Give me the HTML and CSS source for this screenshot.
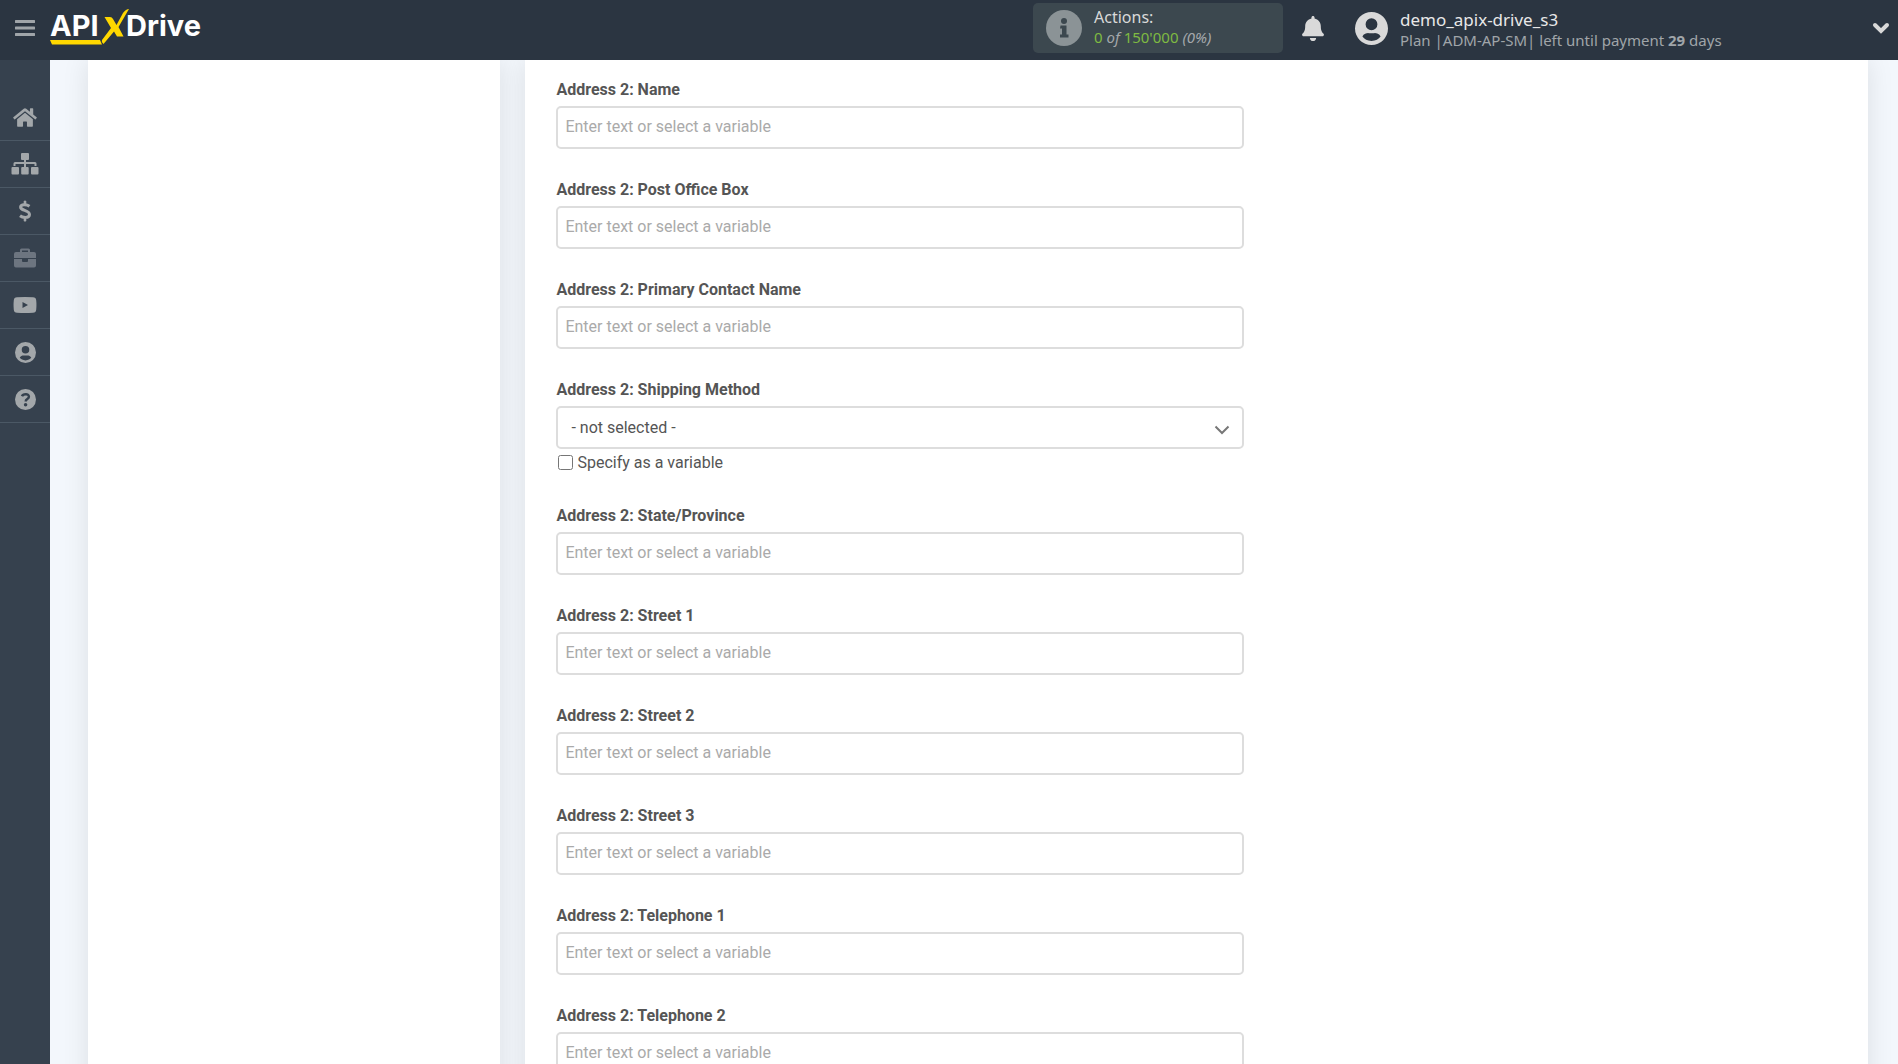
FILE: index.html
```
<!DOCTYPE html>
<html lang="en">
<head>
    <meta charset="UTF-8">
    <meta name="viewport" content="width=device-width, initial-scale=1.0">
    <title>ApiX-Drive</title>
    <link rel="stylesheet" href="styles.css">
</head>
<body>

    <!-- Top bar -->
    <header class="header">
        <button class="icon-btn menu-btn" aria-label="Menu">
            <svg width="20" height="18" viewBox="0 0 20 18"><path d="M1 2.500h18M1 9h18M1 15.500h18" stroke="currentColor" stroke-width="3" stroke-linecap="round"/></svg>
        </button>
        <a class="logo" href="#" aria-label="APIXDrive">
            <svg width="156" height="40" viewBox="0 0 156 40">
                <text class="logo-text" x="0" y="28">API</text>
                <text class="logo-text" x="76" y="28">Drive</text>
                <path fill="#ffd800" d="M54.500 9H60q2 0 3 2l3.500 6L73 5q3-4 6-4L68.500 19l5 9.500H67L64 23.500 53.500 36Q51 34 52 32L61 20zM0 32h50l2 4.500H2z"/>
            </svg>
        </a>

        <div class="actions">
            <svg width="36" height="36" viewBox="0 0 36 36">
                <circle cx="18" cy="18" r="18" fill="#8b9396"/>
                <g fill="#3c484f"><circle cx="18" cy="11" r="3"/><path d="M14.500 15.500h6v9h2v3h-8.500v-3h2v-6h-2z"/></g>
            </svg>
            <div>
                <div class="actions-title">Actions:</div>
                <div class="actions-count"><b>0</b> <i>of</i> <b>150'000</b> <i>(0%)</i></div>
            </div>
        </div>

        <button class="icon-btn bell-btn" aria-label="Notifications">
            <svg width="22" height="25" viewBox="0 0 448 512"><path fill="currentColor" d="M224 512c35.320 0 63.970-28.650 63.970-64H160.030c0 35.350 28.650 64 63.970 64zm215.390-149.710c-19.320-20.760-55.470-51.990-55.470-154.290 0-77.700-54.480-139.900-127.940-155.160V32c0-17.670-14.320-32-31.980-32s-31.980 14.330-31.980 32v20.840C118.560 68.100 64.080 130.300 64.080 208c0 102.300-36.150 133.530-55.470 154.290-6 6.450-8.660 14.160-8.610 21.710.11 16.400 12.980 32 32.100 32h383.800c19.120 0 32-15.600 32.100-32 .05-7.550-2.610-15.270-8.610-21.710z"/></svg>
        </button>

        <div class="user">
            <svg width="33" height="33" viewBox="0 0 24 24"><path fill="currentColor" fill-rule="evenodd" d="M12 0a12 12 0 1 0 0 24a12 12 0 0 0 0-24zM12 4.600a4.300 4.300 0 1 1 0 8.600a4.300 4.300 0 0 1 0-8.600zM12 21c-3 0-5.200-1.300-6.600-3.200c.8-1.900 3-2.500 4.200-2.500c1 .3 3.800.3 4.800 0c1.200 0 3.400.6 4.200 2.500C17.200 19.700 15 21 12 21z"/></svg>
            <div class="user-info">
                <div class="user-name">demo_apix-drive_s3</div>
                <div class="user-plan">Plan |ADM-AP-SM| left until payment <b>29</b> days</div>
            </div>
        </div>

        <button class="icon-btn toggle-btn" aria-label="Account menu">
            <svg width="18" height="12" viewBox="0 0 18 12"><path d="M3 3l6 6l6-6" fill="none" stroke="currentColor" stroke-width="4" stroke-linecap="round"/></svg>
        </button>
    </header>

    <div class="page">
        <!-- Side menu -->
        <nav class="sidebar">
            <a href="#" aria-label="Home">
                <svg width="24" height="21" viewBox="0 0 576 512"><path d="M280.370 148.260L96 300.110V464a16 16 0 0 0 16 16l112.060-.29a16 16 0 0 0 15.920-16V368a16 16 0 0 1 16-16h64a16 16 0 0 1 16 16v95.640a16 16 0 0 0 16 16.050L464 480a16 16 0 0 0 16-16V300L295.670 148.260a12.190 12.190 0 0 0-15.300 0zM571.600 251.470L488 182.560V44.050a12 12 0 0 0-12-12h-56a12 12 0 0 0-12 12v72.610L318.470 43a48 48 0 0 0-61 0L4.340 251.470a12 12 0 0 0-1.600 16.900l25.500 31A12 12 0 0 0 45.150 301l235.220-193.740a12.190 12.190 0 0 1 15.300 0L530.900 301a12 12 0 0 0 16.900-1.600l25.500-31a12 12 0 0 0-1.700-16.930z"/></svg>
            </a>
            <a href="#" aria-label="Connections">
                <svg width="28" height="22" viewBox="0 0 28 22"><rect x="10" y="0" width="8" height="7" rx="1"/><rect x="0.500" y="14" width="7.500" height="7.500" rx="1"/><rect x="10.200" y="14" width="7.500" height="7.500" rx="1"/><rect x="20" y="14" width="7.500" height="7.500" rx="1"/><path d="M13 6h2v3h9q1.500 0 1.500 1.500V13h-2v-2H15v3h-2v-3H4.500v2h-2v-2.500Q2.500 9 4 9h9z"/></svg>
            </a>
            <a href="#" aria-label="Payments">
                <svg width="14" height="22" viewBox="0 0 14 22"><path fill="none" stroke="currentColor" stroke-width="3" d="M11.500 6.200C9.500 4.800 3 3.300 2.600 7C2.300 11 11.700 9.800 11.500 14.600C11.300 18.500 4.500 17.700 2 15.800"/><path d="M5.700 1q1.300-1 2.600 0v4H5.700zM5.700 17h2.600v4q-1.300 1-2.600 0z"/></svg>
            </a>
            <a class="disabled" href="#" aria-label="Business">
                <svg width="22" height="20" viewBox="0 0 22 20"><path fill-rule="evenodd" d="M6 4V2q0-1.500 1.500-1.500h7Q16 .5 16 2v2h4q2 0 2 2v4H0V6q0-2 2-2zM8 4h6V2.500H8zM0 11h8v2q0 1 1 1h4q1 0 1-1v-2h8v6.500q0 2-2 2H2q-2 0-2-2z"/></svg>
            </a>
            <a href="#" aria-label="Video">
                <svg width="24" height="16" viewBox="0 0 24 16"><path fill-rule="evenodd" d="M4 .3q8-.6 16 0q3 .2 3.200 3q.5 4.700 0 9.400q-.2 2.800-3.200 3q-8 .6-16 0q-3-.2-3.200-3q-.5-4.700 0-9.400Q1 .5 4 .3zM9.500 5v6l5.500-3z"/></svg>
            </a>
            <a href="#" aria-label="Profile">
                <svg width="21" height="21" viewBox="0 0 24 24"><path fill-rule="evenodd" d="M12 0a12 12 0 1 0 0 24a12 12 0 0 0 0-24zM12 4.600a4.300 4.300 0 1 1 0 8.600a4.300 4.300 0 0 1 0-8.600zM12 21c-3 0-5.200-1.300-6.600-3.200c.8-1.900 3-2.500 4.200-2.500c1 .3 3.800.3 4.800 0c1.200 0 3.400.6 4.200 2.500C17.200 19.700 15 21 12 21z"/></svg>
            </a>
            <a href="#" aria-label="Help">
                <svg width="21" height="21" viewBox="0 0 24 24"><circle cx="12" cy="12" r="12"/><path d="M8 8.300C9 5.800 15.800 4.600 15.900 8.800c0 2.800-3.700 2.500-3.700 5.400" fill="none" stroke="#36414e" stroke-width="2.800"/><circle cx="12.100" cy="17.900" r="2" fill="#36414e"/></svg>
            </a>
        </nav>

        <main class="content">
            <section class="panel"></section>

            <section class="panel">
                <form class="form">
                    <div class="field">
                        <label for="name">Address 2: Name</label>
                        <input class="control" type="text" id="name" placeholder="Enter text or select a variable">
                    </div>
                    <div class="field">
                        <label for="pobox">Address 2: Post Office Box</label>
                        <input class="control" type="text" id="pobox" placeholder="Enter text or select a variable">
                    </div>
                    <div class="field">
                        <label for="contact">Address 2: Primary Contact Name</label>
                        <input class="control" type="text" id="contact" placeholder="Enter text or select a variable">
                    </div>
                    <div class="field">
                        <label for="shipping">Address 2: Shipping Method</label>
                        <div class="select-wrap">
                            <select class="control" id="shipping">
                                <option>- not selected -</option>
                            </select>
                            <svg class="select-arrow" width="16" height="10" viewBox="0 0 16 10"><path d="M1.500 1.500L8 8l6.500-6.500" fill="none" stroke="#777" stroke-width="2"/></svg>
                        </div>
                        <div class="check">
                            <input type="checkbox" id="variable">
                            <label for="variable">Specify as a variable</label>
                        </div>
                    </div>
                    <div class="field">
                        <label for="state">Address 2: State/Province</label>
                        <input class="control" type="text" id="state" placeholder="Enter text or select a variable">
                    </div>
                    <div class="field">
                        <label for="street1">Address 2: Street 1</label>
                        <input class="control" type="text" id="street1" placeholder="Enter text or select a variable">
                    </div>
                    <div class="field">
                        <label for="street2">Address 2: Street 2</label>
                        <input class="control" type="text" id="street2" placeholder="Enter text or select a variable">
                    </div>
                    <div class="field">
                        <label for="street3">Address 2: Street 3</label>
                        <input class="control" type="text" id="street3" placeholder="Enter text or select a variable">
                    </div>
                    <div class="field">
                        <label for="phone1">Address 2: Telephone 1</label>
                        <input class="control" type="text" id="phone1" placeholder="Enter text or select a variable">
                    </div>
                    <div class="field">
                        <label for="phone2">Address 2: Telephone 2</label>
                        <input class="control" type="text" id="phone2" placeholder="Enter text or select a variable">
                    </div>
                </form>
            </section>
        </main>
    </div>

</body>
</html>
```

FILE: styles.css
```
* {
    margin: 0;
    padding: 0;
    box-sizing: border-box;
}

body {
    display: flex;
    flex-direction: column;
    height: 100vh;
    overflow: hidden;
    background-color: #f3f7fc;
    color: #555;
    font-family: Roboto, sans-serif;
    font-size: 16px;
}

svg {
    display: block;
    flex-shrink: 0;
}

/* Top bar */
.header {
    display: flex;
    align-items: center;
    flex-shrink: 0;
    height: 60px;
    padding: 0 8px 4px 15px;
    background-color: #2b3541;
    color: #d9d9d9;
    font-family: "Noto Sans", sans-serif;
}

.icon-btn {
    border: none;
    background: none;
    color: inherit;
    cursor: pointer;
}

.menu-btn {
    color: #a0a5a9;
}

.logo {
    margin-left: 15px;
    margin-right: auto;
}

.logo-text {
    fill: #fff;
    font-family: Inter, sans-serif;
    font-size: 29px;
    font-weight: 700;
}

.actions {
    display: flex;
    align-items: center;
    gap: 12px;
    width: 250px;
    height: 50px;
    padding: 0 13px;
    border-radius: 5px;
    background-color: #3c484f;
    line-height: 20px;
}

.actions > div {
    padding-bottom: 2px;
}

.actions-count {
    color: #a5a9ac;
    font-size: 15px;
}

.actions-count b {
    color: #7fba42;
    font-weight: 400;
}

.bell-btn {
    margin: 0 31px 0 19px;
}

.user {
    display: flex;
    align-items: center;
    gap: 12px;
    width: 517px;
    line-height: 20px;
}

.user-info {
    padding-top: 4px;
}

.user-name {
    color: #e8e8e8;
    font-size: 17px;
}

.user-plan {
    color: #a0a5a9;
    font-size: 15px;
}

.page {
    display: flex;
    flex: 1;
    min-height: 0;
}

/* Side menu */
.sidebar {
    width: 50px;
    flex-shrink: 0;
    padding-top: 34px;
    background-color: #36414e;
}

.sidebar a {
    display: flex;
    align-items: center;
    justify-content: center;
    height: 47px;
    border-bottom: 1px solid #4b5865;
    color: #a3a7aa;
}

.sidebar .disabled {
    color: #6d7580;
}

.sidebar svg {
    fill: currentColor;
}

/* Panels */
.content {
    display: grid;
    grid-template-columns: 235fr 765fr;
    gap: 25px;
    flex: 1;
    padding: 0 30px 0 38px;
    overflow: hidden;
}

.panel {
    padding: 18px 31px;
    background-color: #fff;
    box-shadow: 0 0 25px rgba(0, 0, 0, 0.1);
}

.form {
    max-width: 688px;
}

.field {
    margin-bottom: 29px;
}

.field > label {
    display: block;
    margin-bottom: 4px;
    font-weight: 700;
    line-height: 24px;
}

.control {
    display: block;
    width: 100%;
    height: 43px;
    padding: 0 7px 2px;
    border: 2px solid #ddd;
    border-radius: 5px;
    background-color: #fff;
    color: #555;
    font-family: inherit;
    font-size: 16px;
}

.control::placeholder {
    color: #aaa;
}

.select-wrap {
    position: relative;
}

select.control {
    padding-left: 13px;
    padding-bottom: 0;
    appearance: none;
}

.select-arrow {
    position: absolute;
    top: 19px;
    right: 14px;
    pointer-events: none;
}

.check {
    display: flex;
    align-items: center;
    gap: 4px;
    height: 26px;
    padding-left: 2px;
}

.check input {
    width: 15px;
    height: 15px;
}
```
